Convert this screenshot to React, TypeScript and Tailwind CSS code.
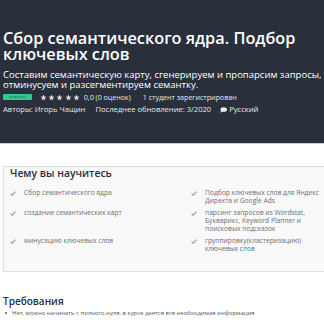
import React from "react";

const Check = () => (
  <svg width="6" height="5" viewBox="0 0 6 5" className="mt-[1.5px] shrink-0">
    <path d="M0.5 2.6 L2.2 4.2 L5.5 0.6" fill="none" stroke="#9ea3aa" strokeWidth="1.3" />
  </svg>
);

const Star = () => (
  <svg width="7" height="7" viewBox="0 0 24 24">
    <path d="M12 1.5l3.1 6.9 7.4.7-5.6 5 1.7 7.4L12 17.6l-6.6 3.9 1.7-7.4-5.6-5 7.4-.7z" fill="#d4d5d7" />
  </svg>
);

const Item = ({ lines }: { lines: string[] }) => (
  <div className="flex">
    <Check />
    <div className="ml-[8px] text-[6.7px] leading-[8px] text-[#686f7a]">
      {lines.map((l, i) => (
        <div key={i} className="whitespace-nowrap">{l}</div>
      ))}
    </div>
  </div>
);

export default function App() {
  return (
    <div className="w-[324px] h-[324px] overflow-hidden bg-white font-['Open_Sans',sans-serif]">
      <div className="bg-[#29303b] h-[144px] pl-[3px] pt-[30px] border-b border-[#c9cacc]">
        <h1 className="text-[16.3px] leading-[16px] font-semibold text-white whitespace-nowrap">
          Сбор семантического ядра. Подбор
          <br />
          ключевых слов
        </h1>
        <p className="mt-[8px] text-[9.5px] leading-[10px] text-white whitespace-nowrap">
          Составим семантическую карту, сгенерируем и пропарсим запросы,
          <br />
          отминусуем и разсегментируем семантку.
        </p>
        <div className="mt-[3px] flex items-center h-[8px] text-[7.1px] text-[#e8e9eb] whitespace-nowrap">
          <span className="w-[29px] h-[6px] rounded-[1px] bg-[#2fc98f] text-[4px] leading-[6px] text-center text-[#17694a]">
            новинка
          </span>
          <span className="ml-[8px] flex gap-[1.2px]">
            <Star />
            <Star />
            <Star />
            <Star />
            <Star />
          </span>
          <span className="ml-[4px]">0,0 (0 оценок)</span>
          <span className="ml-[12px]">1 студент зарегистрирован</span>
        </div>
        <div className="mt-[5px] flex items-center h-[8px] text-[7.6px] text-[#e8e9eb] whitespace-nowrap">
          <span>Авторы: Игорь Чащин</span>
          <span className="ml-[10px]">Последнее обновление: 3/2020</span>
          <svg width="7" height="6" viewBox="0 0 14 12" className="ml-[9px]">
            <ellipse cx="7.5" cy="5" rx="6.5" ry="4.6" fill="#eeeeee" />
            <path d="M2 7.5 L0.5 11.5 L5.5 9" fill="#eeeeee" />
          </svg>
          <span className="ml-[2px]">Русский</span>
        </div>
      </div>
      <div className="mt-[22px] ml-[3px] mr-[-20px] border border-[#dedfe0] bg-[#f9f9f9] pl-[6px] pb-[18px]">
        <div className="text-[10.4px] leading-[12px] font-semibold text-[#29303b]">Чему вы научитесь</div>
        <div className="mt-[10px] grid grid-cols-[181px_1fr] gap-y-[4px]">
          <Item lines={["Сбор семантического ядра"]} />
          <Item lines={["Подбор ключевых слов для Яндекс", "Директа и Google Ads"]} />
          <Item lines={["создание семантических карт"]} />
          <Item lines={["парсинг запросов из Wordstat,", "Букварикс, Keyword Planner и", "поисковых подсказок"]} />
          <Item lines={["минусацию ключевых слов"]} />
          <Item lines={["группировку(кластеризацию)", "ключевых слов"]} />
        </div>
      </div>
      <div className="mt-[23px] pl-[3px] text-[10px] leading-[12px] font-semibold text-[#29303b]">Требования</div>
      <div className="mt-[2px] pl-[5px] flex items-center text-[5.95px] leading-[8px] text-[#505763] whitespace-nowrap">
        <span className="w-[2px] h-[2px] rounded-full bg-[#505763]" />
        <span className="ml-[5px]">Нет, можно начинать с полного нуля, в курсе дается вся необходимая информация</span>
      </div>
    </div>
  );
}
